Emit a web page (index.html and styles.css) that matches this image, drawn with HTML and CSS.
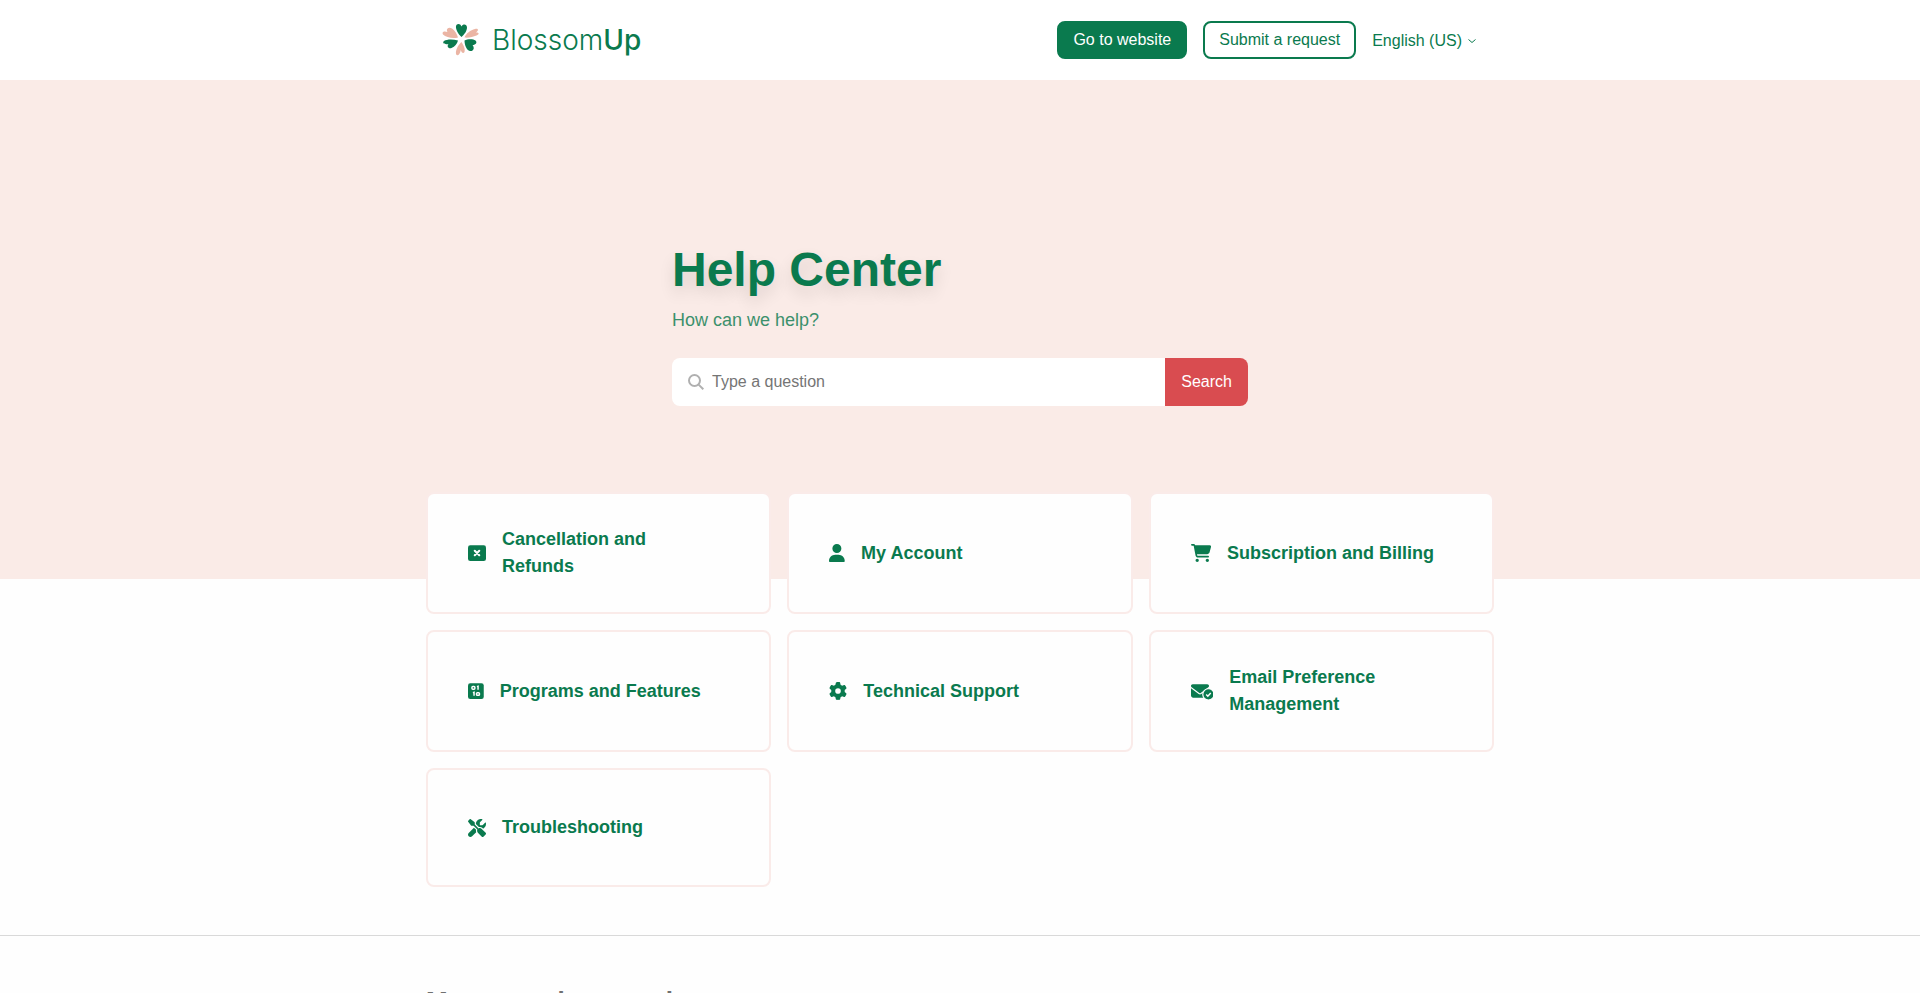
FILE: index.html
```html
<!DOCTYPE html>
<html lang="en-US">
<head>
  <meta charset="UTF-8">
  <meta name="viewport" content="width=device-width, initial-scale=1">
  <title>BlossomUp Help Center</title>
  <link rel="stylesheet" href="styles.css">
</head>
<body>
  <header class="header">
    <div class="container header-inner">
      <a class="logo" href="#">
        <svg class="logo-mark" viewBox="0 0 38 34" aria-hidden="true">
          <path fill="#0a7a4e" d="M19.500 14C16 11 13.500 6 14 3C14.600 .2 18.500 .3 19.500 3.500C21 .5 25 1 25 4.500C25 8 22.300 11.500 19.500 14Z"/>
          <path fill="#ebb5a4" d="M16 14.500C11 15.800 4 14.500 1 11.500C-.5 9 2 7.500 5.500 9C3.500 6 6.500 3.500 10 5.500C13 7.500 15 11 16 14.500Z"/>
          <path fill="#ebb5a4" d="M22.500 14.500C24 10.500 28.500 7 33 6C36.500 5.300 37 7.500 34 9.500C37.500 9.500 37.500 11.500 34.500 12.500C31 14 26.500 15 22.500 14.500Z"/>
          <path fill="#0a7a4e" d="M16 17.500C11 16 5 16 2 18C0 20 2 21.800 6.500 21C4.500 23.500 6.500 26 9.500 25C13 23.800 15 21 16 17.500Z"/>
          <path fill="#0a7a4e" d="M22.500 17.500C25.500 16 31 15.800 33.500 17.500C35.500 19.500 34 22 30.500 22C33 25 31.500 28.500 28 28C24.500 27.500 22.500 21.500 22.500 17.500Z"/>
          <path fill="#ebb5a4" d="M19.500 19C21.500 22 23.500 26 22.500 29C21.500 31 19.500 30 18.800 27C18 31.500 15.500 33.500 14.200 31.500C13 28 16 22 19.500 19Z"/>
        </svg>
        <span class="logo-text">Blossom<span class="logo-up">Up</span></span>
      </a>
      <nav class="header-nav">
        <a class="btn btn-filled" href="#">Go to website</a>
        <a class="btn btn-outline" href="#">Submit a request</a>
        <button class="language" type="button" aria-haspopup="true">
          English (US)
          <svg class="chevron" viewBox="0 0 8 8" aria-hidden="true"><path d="M.5 2.500L4 5.500L7.500 2.500"/></svg>
        </button>
      </nav>
    </div>
  </header>

  <main>
    <section class="hero">
      <div class="hero-inner">
        <h1>Help Center</h1>
        <p>How can we help?</p>
        <form class="search" role="search">
          <label class="search-field" for="query">
            <svg class="search-icon" viewBox="0 0 16 16" aria-hidden="true"><circle cx="6.500" cy="6.500" r="5.500"/><path d="M10.600 10.600L15.300 15.300"/></svg>
            <input id="query" type="search" placeholder="Type a question" aria-label="Type a question">
          </label>
          <button class="search-btn" type="submit">Search</button>
        </form>
      </div>
    </section>

    <section class="container topics">
      <a class="card" href="#">
        <svg class="icon" viewBox="0 0 512 512" aria-hidden="true"><rect y="32" width="512" height="448" rx="64"/><path class="icon-cross" d="M192 192L320 320M320 192L192 320"/></svg>
        <span class="card-title">Cancellation and Refunds</span>
      </a>
      <a class="card" href="#">
        <svg class="icon" viewBox="0 0 448 512" aria-hidden="true"><path d="M224 256A128 128 0 1 0 224 0a128 128 0 1 0 0 256zm-45.700 48C79.800 304 0 383.800 0 482.300C0 498.700 13.300 512 29.700 512H418.300c16.400 0 29.700-13.300 29.700-29.700C448 383.800 368.200 304 269.700 304H178.300z"/></svg>
        <span class="card-title">My Account</span>
      </a>
      <a class="card" href="#">
        <svg class="icon" viewBox="0 0 576 512" aria-hidden="true"><path d="M0 24C0 10.700 10.700 0 24 0H69.500c22 0 41.500 12.800 50.600 32h411c26.300 0 45.500 25 38.600 50.400l-41 152.300c-8.500 31.400-37 53.300-69.500 53.300H170.700l5.400 28.500c2.200 11.300 12.100 19.500 23.600 19.500H488c13.300 0 24 10.700 24 24s-10.700 24-24 24H199.700c-34.600 0-64.300-24.600-70.700-58.500L77.400 54.500c-.7-3.800-4-6.500-7.900-6.500H24C10.700 48 0 37.300 0 24zM128 464a48 48 0 1 1 96 0 48 48 0 1 1 -96 0zm336-48a48 48 0 1 1 0 96 48 48 0 1 1 0-96z"/></svg>
        <span class="card-title">Subscription and Billing</span>
      </a>
      <a class="card" href="#">
        <svg class="icon" viewBox="0 0 448 512" aria-hidden="true">
          <rect y="32" width="448" height="448" rx="64"/>
          <g class="icon-cut">
            <rect x="112" y="128" width="84" height="76" rx="26"/>
            <path d="M254 132L286 120V222M140 304L172 292V394"/>
            <rect x="242" y="304" width="84" height="76" rx="26"/>
          </g>
        </svg>
        <span class="card-title">Programs and Features</span>
      </a>
      <a class="card" href="#">
        <svg class="icon" viewBox="0 0 512 512" aria-hidden="true"><path d="M495.900 166.600c3.200 8.700 .5 18.400-6.400 24.600l-43.300 39.400c1.100 8.300 1.700 16.800 1.700 25.400s-.6 17.100-1.700 25.400l43.300 39.400c6.900 6.200 9.600 15.900 6.400 24.600c-4.400 11.900-9.700 23.300-15.800 34.300l-4.700 8.100c-6.600 11-14 21.400-22.100 31.200c-5.900 7.200-15.700 9.600-24.500 6.800l-55.700-17.700c-13.400 10.300-28.200 18.900-44 25.400l-12.500 57.100c-2 9.100-9 16.300-18.200 17.800c-13.800 2.300-28 3.500-42.500 3.500s-28.700-1.200-42.500-3.500c-9.200-1.500-16.200-8.700-18.200-17.800l-12.500-57.100c-15.800-6.500-30.600-15.100-44-25.400L83.100 425.900c-8.800 2.800-18.600 .3-24.500-6.800c-8.100-9.800-15.500-20.200-22.100-31.200l-4.700-8.100c-6.100-11-11.400-22.400-15.800-34.300c-3.200-8.700-.5-18.400 6.400-24.600l43.300-39.400C64.600 273.100 64 264.600 64 256s.6-17.100 1.700-25.400L22.400 191.200c-6.900-6.200-9.600-15.900-6.400-24.600c4.400-11.900 9.700-23.300 15.800-34.300l4.700-8.100c6.600-11 14-21.400 22.100-31.200c5.900-7.200 15.700-9.600 24.500-6.800l55.700 17.700c13.400-10.300 28.200-18.900 44-25.400l12.500-57.100c2-9.100 9-16.300 18.200-17.800C227.300 1.200 241.500 0 256 0s28.700 1.200 42.500 3.500c9.200 1.500 16.200 8.700 18.200 17.800l12.500 57.100c15.800 6.500 30.600 15.100 44 25.400l55.700-17.700c8.800-2.800 18.600-.3 24.500 6.800c8.100 9.800 15.500 20.200 22.100 31.200l4.700 8.100c6.100 11 11.400 22.400 15.800 34.300zM256 336a80 80 0 1 0 0-160 80 80 0 1 0 0 160z"/></svg>
        <span class="card-title">Technical Support</span>
      </a>
      <a class="card" href="#">
        <svg class="icon" viewBox="0 0 640 512" aria-hidden="true">
          <path d="M48 64H464C490.500 64 512 85.500 512 112C512 127 505 141 493 150L275 314Q256 326 237 314L19 150C7 141 0 127 0 112C0 85.500 21.500 64 48 64Z"/>
          <path d="M0 176L218 340Q256 366 294 340L336 308C326 360 334 408 360 448H64C28.700 448 0 419.300 0 384Z"/>
          <circle class="icon-badge" cx="496" cy="352" r="160"/>
          <path class="icon-cut" d="M432 358L478 402L562 310"/>
        </svg>
        <span class="card-title">Email Preference Management</span>
      </a>
      <a class="card" href="#">
        <svg class="icon" viewBox="0 0 512 512" aria-hidden="true"><path d="M78.600 5C69.100-2.400 55.600-1.500 47 7L7 47c-8.500 8.500-9.400 22-2.100 31.600l80 104c4.500 5.900 11.600 9.400 19 9.400h54.100l109 109c-14.700 29-10 65.400 14.300 89.600l112 112c12.500 12.500 32.800 12.500 45.300 0l64-64c12.500-12.500 12.500-32.800 0-45.300l-112-112c-24.200-24.200-60.600-29-89.600-14.300l-109-109V104c0-7.500-3.500-14.500-9.400-19L78.600 5zM19.900 396.100C7.200 408.800 0 426.100 0 444.100C0 481.600 30.400 512 67.900 512c18 0 35.300-7.200 48-19.900L233.700 374.300c-7.800-20.900-9-43.600-3.600-65.100l-61.700-61.700L19.900 396.100zM512 144c0-10.500-1.100-20.700-3.200-30.500c-2.400-11.200-16.100-14.100-24.200-6l-63.900 63.900c-3 3-7.100 4.700-11.300 4.700H352c-8.800 0-16-7.200-16-16V102.600c0-4.200 1.700-8.300 4.700-11.300l63.900-63.900c8.100-8.100 5.200-21.800-6-24.200C388.700 1.100 378.500 0 368 0C288.500 0 224 64.500 224 144l0 .8 85.300 85.300c36-9.100 75.800 .5 104 28.700L429 274.500c49-23 83-72.800 83-130.500z"/></svg>
        <span class="card-title">Troubleshooting</span>
      </a>
    </section>

    <section class="popular">
      <div class="container">
        <h2>Most popular questions</h2>
      </div>
    </section>
  </main>
</body>
</html>
```
FILE: styles.css
```css
* {
  box-sizing: border-box;
}

body {
  margin: 0;
  background: #fefefe;
  color: #0a7a4e;
  font-family: "Liberation Sans", Arial, sans-serif;
  font-size: 16px;
  line-height: 24px;
}

a {
  color: inherit;
  text-decoration: none;
}

button,
input {
  font: inherit;
}

.container {
  width: 100%;
  max-width: 1068px;
  margin: 0 auto;
}

/* Header */
.header {
  background: #fff;
}

.header-inner {
  display: flex;
  align-items: center;
  justify-content: space-between;
  min-height: 80px;
  padding: 0 18px 0 16px;
}

.logo {
  display: flex;
  align-items: center;
  gap: 12px;
}

.logo-mark {
  width: 38px;
  height: 34px;
}

.logo-text {
  font-family: Inter, sans-serif;
  font-size: 28px;
  font-weight: 300;
}

.logo-up {
  font-weight: 500;
}

.header-nav {
  display: flex;
  align-items: center;
  gap: 16px;
}

.btn {
  padding: 5px 14px;
  border: 2px solid #0a7a4e;
  border-radius: 8px;
}

.btn-filled {
  background: #0a7a4e;
  color: #fff;
}

.language {
  display: flex;
  align-items: center;
  gap: 6px;
  padding: 2px 0 0;
  border: none;
  background: none;
  color: inherit;
  cursor: pointer;
}

.chevron {
  width: 8px;
  height: 8px;
  fill: none;
  stroke: currentColor;
}

/* Hero */
.hero {
  padding: 160px 16px 173px;
  background: #faebe7;
}

.hero-inner {
  max-width: 576px;
  margin: 0 auto;
}

h1 {
  margin: 0;
  font-size: 48px;
  line-height: 60px;
  text-shadow: 0 8px 16px rgba(0, 0, 0, 0.12);
}

.hero p {
  margin: 6px 0 24px;
  font-size: 18px;
  line-height: 28px;
  opacity: 0.8;
}

.search {
  display: flex;
  height: 48px;
  overflow: hidden;
  border-radius: 8px;
}

.search-field {
  display: flex;
  flex: 1;
  align-items: center;
  gap: 8px;
  padding-left: 16px;
  background: #fff;
}

.search-icon {
  width: 16px;
  height: 16px;
  fill: none;
  stroke: #b0b0b0;
  stroke-width: 2;
}

.search input {
  flex: 1;
  min-width: 0;
  padding: 0;
  border: none;
  outline: none;
  background: none;
}

.search input::placeholder {
  color: #757575;
}

.search-btn {
  padding: 0 16px;
  border: none;
  background: #d94c50;
  color: #fff;
  cursor: pointer;
}

/* Topics, the first row overlaps the hero */
.topics {
  display: grid;
  grid-template-columns: repeat(3, 1fr);
  gap: 16px;
  margin-top: -87px;
  margin-bottom: 48px;
}

.card {
  display: flex;
  align-items: center;
  min-height: 119px;
  padding: 32px 40px;
  border: 2px solid #faebe9;
  border-radius: 8px;
  background: #fefefe;
  font-size: 18px;
  font-weight: bold;
  line-height: 27px;
}

.card-title {
  margin: 0 16px;
}

.icon {
  flex: none;
  height: 18px;
  fill: currentColor;
}

.icon-cut {
  fill: none;
  stroke: #fefefe;
  stroke-width: 42;
}

.icon-cross {
  stroke: #fefefe;
  stroke-width: 60;
  stroke-linecap: round;
}

.icon-badge {
  stroke: #fefefe;
  stroke-width: 32;
}

/* Popular questions */
.popular {
  padding: 48px 0;
  border-top: 1px solid #d9d9d9;
  color: #707070;
}

h2 {
  margin: 0;
  font-size: 26px;
  line-height: 34px;
}
```
